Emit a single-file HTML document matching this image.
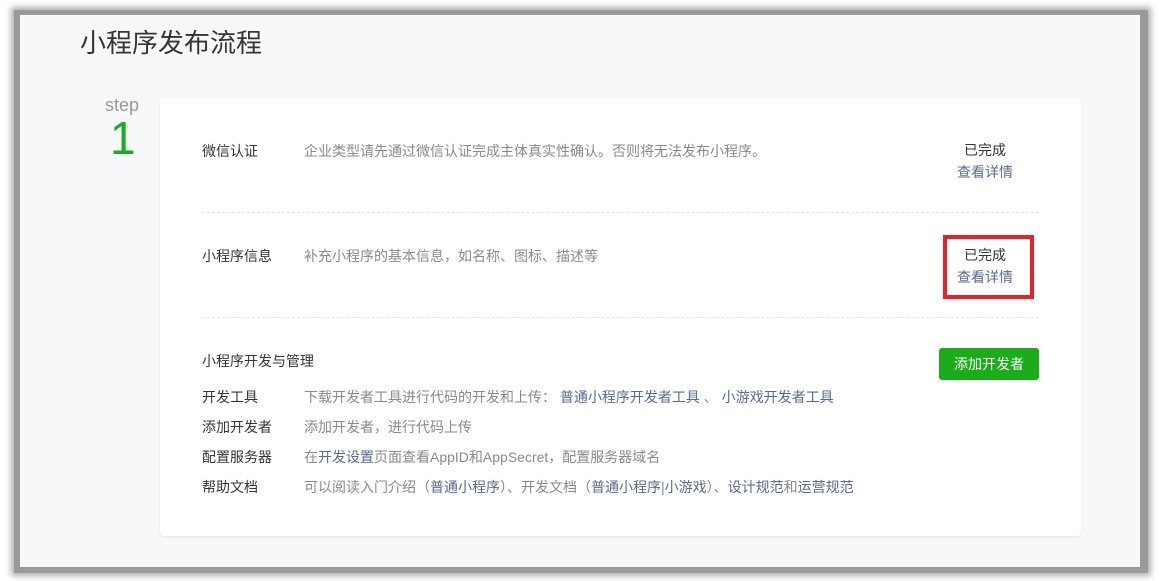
<!DOCTYPE html>
<html><head><meta charset="utf-8"><style>
*{margin:0;padding:0;box-sizing:border-box}
body{width:1161px;height:581px;background:#fff;position:relative;overflow:hidden;font-family:"Liberation Sans","Noto Sans CJK SC",sans-serif;color:#353535}
.frame{position:absolute;left:14px;top:10px;width:1134px;height:563px;background:#9a9a9a;box-shadow:0 0 6px 3px #b0b0b0}
.page{position:absolute;left:20px;top:15px;width:1120px;height:552px;background:#f7f8fa}
.title{position:absolute;left:80px;top:27px;font-size:26px;color:#353535;line-height:32px}
.step{position:absolute;left:105px;top:95px;font-size:18px;color:#9a9a9a;line-height:20px}
.num{position:absolute;left:110px;top:113px;font-size:46px;color:#1aad19;line-height:50px}
.card{position:absolute;left:160px;top:98px;width:921px;height:438px;background:#fff;border-radius:4px;box-shadow:0 1px 2px #e4e4e4}
.t{position:absolute;font-size:14px;line-height:18px;white-space:nowrap}
.lab{color:#353535;left:202px}
.desc{color:#8a8a8a;left:304px}
a{color:#576b95;text-decoration:none}
.dash{position:absolute;left:202px;width:837px;border-top:1px dashed #e4e4e4}
.done{color:#353535;width:60px;text-align:center;left:955px}
.red{position:absolute;left:943px;top:235px;width:91px;height:64px;border:4px solid #e8202a}
.btn{position:absolute;left:939px;top:348px;width:100px;height:32px;background:#1aad19;border-radius:3px;color:#fff;font-size:14px;line-height:32px;text-align:center}
</style></head><body>
<div class="frame"></div>
<div class="page"></div>
<div class="title">小程序发布流程</div>
<div class="step">step</div>
<div class="num">1</div>
<div class="card"></div>
<div class="t lab" style="top:142px">微信认证</div>
<div class="t desc" style="top:142px">企业类型请先通过微信认证完成主体真实性确认。否则将无法发布小程序。</div>
<div class="t done" style="top:141px">已完成</div>
<div class="t done" style="top:163px"><a>查看详情</a></div>
<div class="dash" style="top:212px"></div>
<div class="t lab" style="top:247px">小程序信息</div>
<div class="t desc" style="top:247px">补充小程序的基本信息，如名称、图标、描述等</div>
<div class="t done" style="top:246px">已完成</div>
<div class="t done" style="top:268px"><a>查看详情</a></div>
<div class="red"></div>
<div class="dash" style="top:317px"></div>
<div class="t lab" style="top:352px">小程序开发与管理</div>
<div class="btn">添加开发者</div>
<div class="t lab" style="top:388px">开发工具</div>
<div class="t desc" style="top:388px">下载开发者工具进行代码的开发和上传： <a>普通小程序开发者工具</a> 、 <a>小游戏开发者工具</a></div>
<div class="t lab" style="top:418px">添加开发者</div>
<div class="t desc" style="top:418px">添加开发者，进行代码上传</div>
<div class="t lab" style="top:448px">配置服务器</div>
<div class="t desc" style="top:448px">在<a>开发设置</a>页面查看AppID和AppSecret，配置服务器域名</div>
<div class="t lab" style="top:478px">帮助文档</div>
<div class="t desc" style="top:478px">可以阅读入门介绍（<a>普通小程序</a>）、开发文档（<a>普通小程序</a>|<a>小游戏</a>）、<a>设计规范</a>和<a>运营规范</a></div>
</body></html>
